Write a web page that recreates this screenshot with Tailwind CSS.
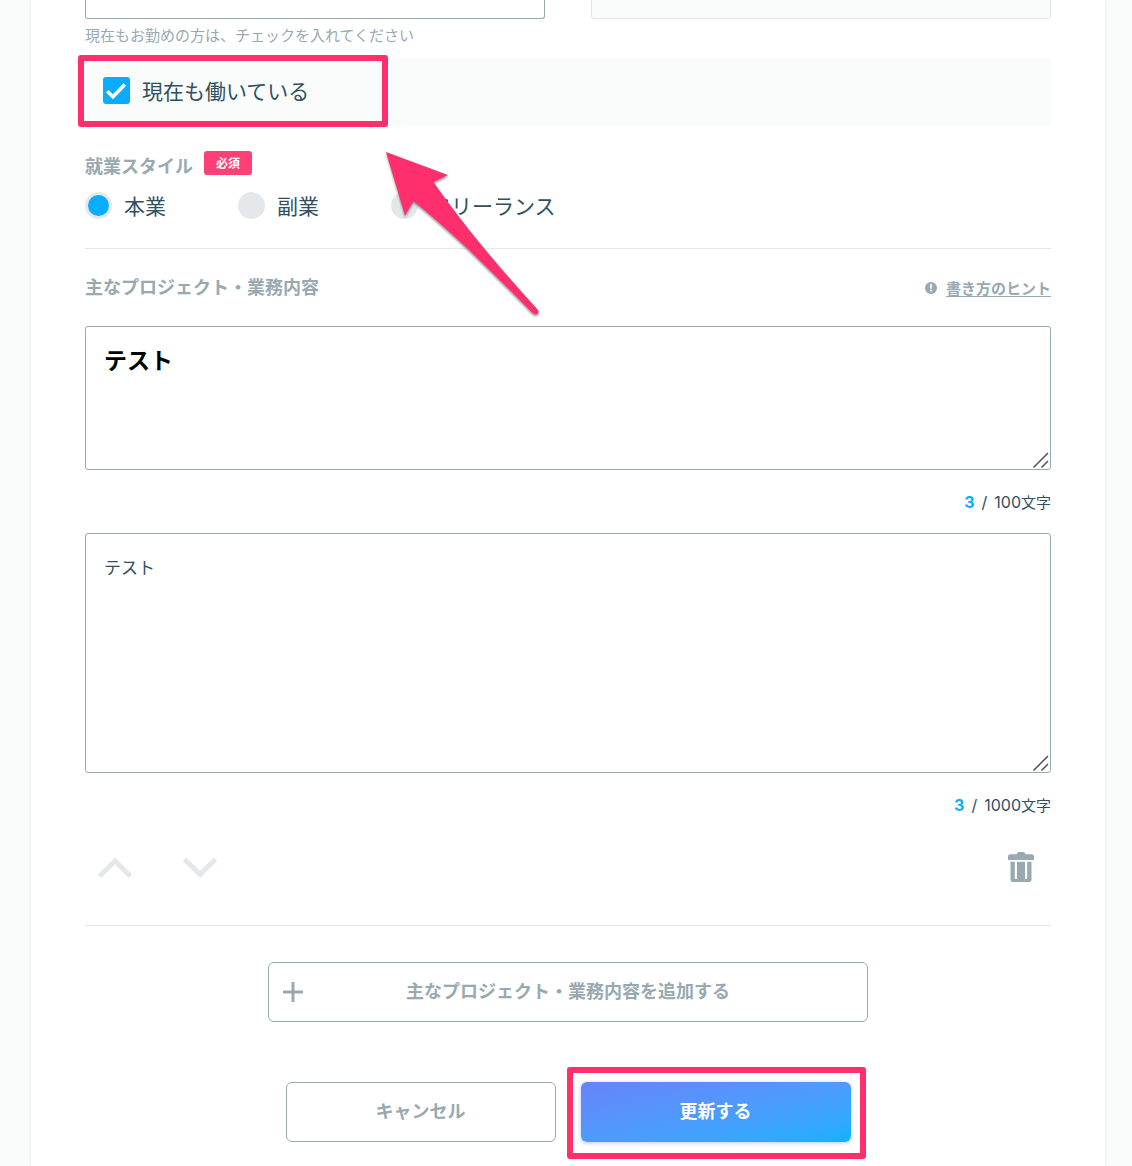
<!DOCTYPE html>
<html lang="ja">

<head>
  <meta charset="UTF-8" />
  <meta name="viewport" content="width=device-width, initial-scale=1.0" />
  <title>職歴の編集</title>
  <script src="https://cdn.jsdelivr.net/npm/@tailwindcss/browser@4"></script>
</head>

<body class="bg-[#fafcfb] font-['Noto_Sans_CJK_JP',sans-serif] text-[#30505f]">

  <main class="min-h-screen ml-[31px] mr-[27px] px-[54px] pb-6 bg-white shadow-[0_0_3px_rgba(60,80,90,0.14)]">
    <form class="relative">

      <!-- period -->
      <div class="grid grid-cols-2 gap-[46px]">
        <input type="text" aria-label="開始年月" class="h-[19px] w-full rounded-b-[3px] border border-t-0 border-[#98a9b1] bg-white" />
        <input type="text" aria-label="終了年月" disabled class="h-[19px] w-full rounded-b-[3px] border border-t-0 border-[#e4e8ea] bg-[#fafcfb]" />
      </div>
      <p class="mb-[7px] text-[15px] leading-8 text-[#98a9b1]">現在もお勤めの方は、チェックを入れてください</p>

      <div class="relative flex h-[68px] items-center bg-[#fafcfb] px-[18px] pb-1">
        <label class="flex items-center gap-3 text-[21px] leading-7">
          <span class="relative h-[27px] w-[27px]">
            <input type="checkbox" checked class="block h-[27px] w-[27px] appearance-none rounded-[3px] bg-[#d9dfe2] checked:bg-[#09adff]" />
            <svg class="pointer-events-none absolute inset-0" width="27" height="27" viewBox="0 0 27 27" fill="none" stroke="#fff" stroke-width="3.6">
              <path d="M4.2 14.2 L10 19.8 L21.8 7.4" />
            </svg>
          </span>
          現在も働いている
        </label>
        <div class="pointer-events-none absolute -left-[7px] -top-[3px] h-[72px] w-[310px] rounded-[3px] border-6 border-[#ff2e6c]"></div>
      </div>

      <!-- work style -->
      <div role="radiogroup" aria-labelledby="style-label" class="border-b border-[#e4e8ea] pt-6 pb-7">
        <div class="flex items-start gap-[11px]">
          <span id="style-label" class="text-[18px] leading-[30px] font-bold text-[#98a9b1]">就業スタイル</span>
          <span class="mt-px h-6 rounded-[3px] bg-[#ff4076] px-3 text-[12px] leading-6 font-bold text-white">必須</span>
        </div>
        <div class="mt-[10px] flex gap-[72px] text-[21px] leading-[30px]">
          <label class="flex items-center gap-3">
            <input type="radio" name="style" checked class="h-[27px] w-[27px] appearance-none rounded-full border-3 border-[#e4e8ea] bg-[#e4e8ea] checked:bg-[#09adff]" />
            本業
          </label>
          <label class="flex items-center gap-3">
            <input type="radio" name="style" class="h-[27px] w-[27px] appearance-none rounded-full border-3 border-[#e4e8ea] bg-[#e4e8ea] checked:bg-[#09adff]" />
            副業
          </label>
          <label class="flex items-center gap-3">
            <input type="radio" name="style" class="h-[27px] w-[27px] appearance-none rounded-full border-3 border-[#e4e8ea] bg-[#e4e8ea] checked:bg-[#09adff]" />
            フリーランス
          </label>
        </div>
      </div>

      <!-- project -->
      <div class="flex items-end justify-between pt-[22px] pb-[22px] font-bold text-[#98a9b1]">
        <h2 class="pb-[3px] text-[18px] leading-[30px]">主なプロジェクト・業務内容</h2>
        <a href="#" class="flex items-center gap-[9px] text-[15px] leading-8">
          <svg width="12" height="12" viewBox="0 0 12 12">
            <circle cx="6" cy="6" r="6" fill="#98a9b1" />
            <path d="M5 2.2h2l-.3 4.6H5.3z" fill="#fff" />
            <circle cx="6" cy="8.6" r="1" fill="#fff" />
          </svg>
          <span class="underline underline-offset-2">書き方のヒント</span>
        </a>
      </div>

      <div class="relative">
        <textarea aria-label="プロジェクト名" class="block h-[144px] w-full resize-none rounded-[3px] border border-[#98a9b1] bg-white px-[18px] py-4 text-[23px] leading-8 font-bold text-black">テスト</textarea>
        <svg class="pointer-events-none absolute right-[2px] bottom-[2px]" width="16" height="16" viewBox="0 0 16 16" stroke="#505355" stroke-width="1.5">
          <path d="M0.5 15.5 L15 1 M8.5 15.5 L15 9" />
        </svg>
      </div>
      <p class="flex h-[63px] items-baseline justify-end gap-[7px] pt-4 font-[Inter,'Noto_Sans_CJK_JP',sans-serif] text-[16px] leading-8">
        <b class="text-[#09adff]">3</b>
        <span>/</span>
        <span>100<span class="text-[15px]">文字</span></span>
      </p>

      <div class="relative">
        <textarea aria-label="業務内容" class="block h-[240px] w-full resize-none rounded-[3px] border border-[#98a9b1] bg-white px-[18px] py-[17px] text-[17px] leading-8">テスト</textarea>
        <svg class="pointer-events-none absolute right-[2px] bottom-[2px]" width="16" height="16" viewBox="0 0 16 16" stroke="#505355" stroke-width="1.5">
          <path d="M0.5 15.5 L15 1 M8.5 15.5 L15 9" />
        </svg>
      </div>
      <p class="flex h-16 items-baseline justify-end gap-[7px] pt-4 font-[Inter,'Noto_Sans_CJK_JP',sans-serif] text-[16px] leading-8">
        <b class="text-[#09adff]">3</b>
        <span>/</span>
        <span>1000<span class="text-[15px]">文字</span></span>
      </p>

      <!-- order / delete -->
      <div class="flex items-center justify-between border-b border-[#e4e8ea] pt-[15px] pr-4 pb-[43px] pl-3">
        <div class="flex gap-[49px]">
          <button type="button" aria-label="上へ移動">
            <svg width="36" height="30" viewBox="0 0 36 30" fill="none" stroke="#e4e8ea" stroke-width="5">
              <path d="M2.5 24.3 L18 9 L33.5 24.3" />
            </svg>
          </button>
          <button type="button" aria-label="下へ移動">
            <svg width="36" height="30" viewBox="0 0 36 30" fill="none" stroke="#e4e8ea" stroke-width="5">
              <path d="M2.5 7.3 L18 22.5 L33.5 7.3" />
            </svg>
          </button>
        </div>
        <button type="button" aria-label="削除">
          <svg width="27" height="30" viewBox="0 0 27 30" fill="#98a9b1">
            <path d="M9 2.200 V1.500 Q9 0 10.500 0 H15.500 Q17 0 17 1.500 V2.200 H23.500 Q26 2.200 26 4.500 V8 H0 V4.500 Q0 2.200 2.500 2.200 Z" />
            <path fill-rule="evenodd" d="M2.500 9.800 H23.500 V27.500 Q23.500 30 21 30 H5 Q2.500 30 2.500 27.500 Z M6.800 9.800 V26 Q6.800 27 8 27 H9 V9.800 Z M17 9.800 V27 H18 Q19.200 27 19.200 26 V9.800 Z" />
          </svg>
        </button>
      </div>

      <button type="button" class="relative mx-auto mt-9 block h-[60px] w-[600px] max-w-full rounded-md border border-[#98a9b1] pb-1 text-[18px] font-bold text-[#98a9b1]">
        <svg class="absolute left-[14px] top-[19px]" width="20" height="20" viewBox="0 0 20 20" fill="none" stroke="#98a9b1" stroke-width="3">
          <path d="M0 10 H20 M10 0 V20" />
        </svg>
        主なプロジェクト・業務内容を追加する
      </button>

      <div class="mt-[60px] flex justify-center gap-[25px] text-[18px] font-bold">
        <button type="button" class="h-[60px] w-[270px] rounded-md border border-[#98a9b1] pb-1 text-[#98a9b1]">キャンセル</button>
        <div class="relative">
          <button type="submit" class="block h-[60px] w-[270px] rounded-md bg-linear-to-br from-[#6683fa] to-[#09b1ff] pb-1 text-white shadow-[0_1px_4px_rgba(80,110,240,0.4)]">更新する</button>
          <div class="pointer-events-none absolute -top-[15px] -right-[15px] -bottom-[17px] -left-[14px] rounded-[3px] border-6 border-[#ff2e6c]"></div>
        </div>
      </div>

      <!-- arrow -->
      <svg class="pointer-events-none absolute left-[295px] top-[145px] drop-shadow-[0_2px_1px_rgba(0,0,0,0.4)]" width="166" height="180" viewBox="380 145 166 180" fill="#ff2e6c">
        <path d="M386 152 L448 175 L433.500 182 Q448 203 470 231 Q503 272 538 310 Q539.500 313 537 314 Q534.500 315 532 312.500 Q501 281 468 249 Q438 221 413.500 201 L405 215.500 Z" />
      </svg>

    </form>
  </main>

</body>

</html>
